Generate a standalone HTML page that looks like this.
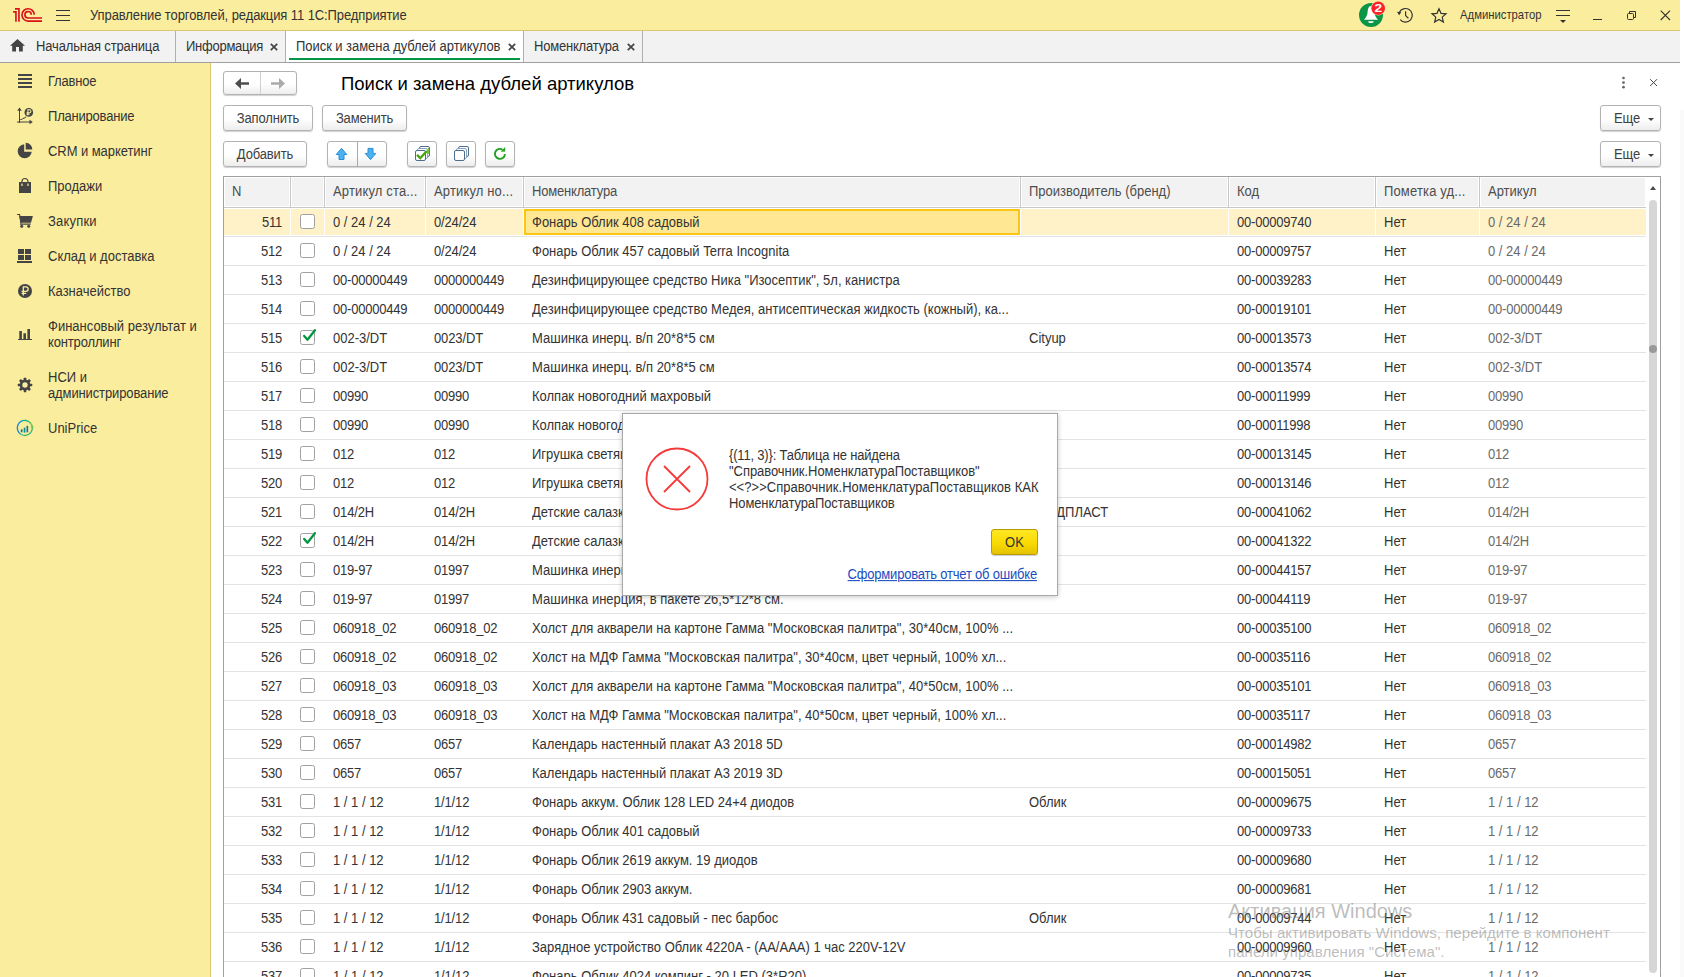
<!DOCTYPE html>
<html lang="ru">
<head>
<meta charset="utf-8">
<title>Управление торговлей, редакция 11 1С:Предприятие</title>
<style>
*{box-sizing:border-box;margin:0;padding:0}
html,body{width:1684px;height:977px;overflow:hidden;background:#fff}
body{font-family:"Liberation Sans",Arial,sans-serif;font-size:13px;color:#333;position:relative}
.abs{position:absolute}
#app{position:absolute;left:0;top:0;width:1680px;height:977px;overflow:hidden;background:#fff}
#edge{position:absolute;left:1680px;top:110px;width:4px;height:867px;background:#fafafa}
/* top bar */
#top{position:absolute;left:0;top:0;width:1680px;height:31px;background:#fbed9e;border-bottom:1px solid #d9c66f}
#top .ttl{position:absolute;left:90px;top:0;height:30px;line-height:31px;font-size:13px;color:#333;white-space:nowrap}
#top .usr{position:absolute;left:1460px;top:0;height:30px;line-height:30px;font-size:11.3px;color:#333;white-space:nowrap}
/* tabs */
#tabs{position:absolute;left:0;top:31px;width:1680px;height:32px;background:#f2f2f2;border-bottom:1px solid #a0a0a0}
.tsep{position:absolute;top:0;width:1px;height:31px;background:#b0b0b0}
.tt{position:absolute;top:0;height:31px;line-height:31px;white-space:nowrap;color:#333}
/* sidebar */
#side{position:absolute;left:0;top:63px;width:211px;height:914px;background:#fbed9e;border-right:1px solid #d9c66f}
.mi{position:absolute;left:48px;white-space:nowrap;line-height:16px;color:#333}
/* form */
.btn{letter-spacing:-.15px;position:absolute;height:26px;border:1px solid #b3b3b3;border-radius:3px;background:linear-gradient(#fff 0,#fff 55%,#ededed 100%);box-shadow:0 1px 1px rgba(0,0,0,.18);text-align:center;line-height:25px;color:#404040;white-space:nowrap}
.btn.nav{height:24px}
.btn .sep{position:absolute;top:0;bottom:0;width:1px;background:#d0d0d0}
h1{position:absolute;left:341px;top:72px;height:24px;line-height:24px;font-size:18.5px;font-weight:normal;color:#000;white-space:nowrap}
.dd{position:absolute;left:47px;top:12px;width:0;height:0;border:3.500px solid transparent;border-bottom:none;border-top:3.500px solid #444}
/* table */
.tbl{position:absolute;left:223px;top:176px;width:1438px;height:820px;border:1px solid #a0a0a0;border-bottom:none;background:#fff;overflow:hidden}
.tbl>*{position:absolute}
.thead{left:0;top:0;width:1422px;height:31px;background:#fff;border-bottom:1px solid #c8c8c8}
.th{position:absolute;top:1px;height:28px;background:#f2f2f2;color:#4d4d4d;line-height:27px;overflow:hidden;white-space:nowrap}
.th span{display:block;overflow:hidden}
.vs{position:absolute;top:0;width:1px;height:30px;background:#c8c8c8}
.tr{left:0;width:1422px;height:29px;border-bottom:1px solid #e3e3e3}
.td{position:absolute;top:1px;height:26px;line-height:27px;margin-top:0;padding-right:2px;overflow:hidden;white-space:nowrap;color:#333}
.td span{display:block;overflow:hidden;margin-top:-1px;height:28px;line-height:29px}
.td.num{text-align:right;padding-right:8px;padding-left:0 !important}
.td.gray{color:#6a6a6a}
.tr.sel .td{background:#fff2c8}
.tr.sel .td.act{background:#ffe794;border:2px solid #fac515}
.tr.sel .td.act span{margin-top:-3px;margin-left:-2px}
.cb{position:absolute;left:9px;top:5px;width:15px;height:15px;border:1px solid #a0a0a0;border-radius:2.500px;background:#fff}
.cb svg{position:absolute;left:-1px;top:-6px}
.vsb{left:1422px;top:0;width:14px;height:820px;background:#fff}
.vsb .up{position:absolute;left:4px;top:9px;width:0;height:0;border:3.5px solid transparent;border-top:none;border-bottom:4px solid #4a4a4a}
.vsb .thumb{position:absolute;left:3px;top:23px;width:8px;height:773px;border-radius:4px;background:#d6d6d6}
.vsb .dot{position:absolute;left:3px;top:168px;width:8px;height:8px;border-radius:4px;background:#999}
.td span,.th span{transform:scaleY(1.07);transform-origin:0 19.500px}
.mi .l{display:block;height:16px;transform:scaleY(1.07);transform-origin:0 12.500px}
.tt,.ttl{transform:scaleY(1.07);transform-origin:0 20px}
.usr{transform:scaleY(1.07);transform-origin:0 19px}
.bt{display:inline-block;height:24px;transform:scaleY(1.07);transform-origin:0 17px}
#dlg .msg span{display:block;height:16px;transform:scaleY(1.07);transform-origin:0 12.500px}
#dlg .ok span,#dlg .lnk span{display:inline-block;transform:scaleY(1.07);transform-origin:0 75%}
#dlg .lnk span{text-decoration:underline;text-underline-offset:1px}
/* dialog */
#dlg{position:absolute;left:622px;top:413px;width:436px;height:183px;background:#fff;border:1px solid #a8a8a8;box-shadow:0 1px 5px rgba(0,0,0,.22)}
#dlg .msg{position:absolute;left:106px;top:34px;line-height:16px;white-space:nowrap;color:#333;font-size:13px}
#dlg .ok{position:absolute;left:368px;top:115px;width:47px;height:26px;border:1px solid #b89b00;border-radius:3px;background:linear-gradient(#ffe824 0,#f8d800 60%,#e3c300 100%);text-align:center;line-height:25px;color:#333;box-shadow:0 1px 1px rgba(0,0,0,.2)}
#dlg .lnk{position:absolute;right:20px;top:153px;line-height:16px;letter-spacing:-.2px;color:#1a4dc0;text-decoration:underline;white-space:nowrap}
/* watermark */
#wm{position:absolute;left:1228px;top:899px;color:rgba(105,105,105,.45);white-space:nowrap}
</style>
</head>
<body>
<div id="app">
<div id="top">
 <svg class="abs" style="left:0;top:0" width="48" height="30" viewBox="0 0 48 30"><g fill="none" stroke="#d8121b" stroke-width="1.65"><path d="M15 8.900H18.950V21.800"/><path d="M13.100 11.900H15.950V21.800"/><path d="M34.250 14.700A6.150 6.150 0 1 0 28.100 21.050H42"/><path d="M31.300 14.700A3.200 3.200 0 1 0 28.100 17.950H42"/></g></svg>
 <div class="abs" style="left:56px;top:10px;width:14px;height:1px;background:#333;box-shadow:0 5px 0 #333,0 10px 0 #333"></div>
 <div class="ttl" style="letter-spacing:-.095px">Управление торговлей, редакция 11 1С:Предприятие</div>
 <svg class="abs" style="left:1355px;top:0" width="34" height="30" viewBox="1355 0 34 30"><circle cx="1371" cy="15" r="12" fill="#0a9646"/><path d="M1371 6C1368.500 6 1367.900 9 1367.600 12C1367.300 15.500 1366.200 17.600 1364 19.700H1378C1375.800 17.600 1374.700 15.500 1374.400 12C1374.100 9 1373.500 6 1371 6Z" fill="#fff"/><path d="M1368.200 21.200h5.600a2.800 1.900 0 0 1-5.600 0z" fill="#fff"/><circle cx="1378.200" cy="8.200" r="7.300" fill="#fdf3c0"/><circle cx="1378.200" cy="8.200" r="6.800" fill="#ff2222"/><text x="1374.400" y="12" font-size="10.800" font-weight="bold" fill="#fff" textLength="7.600" lengthAdjust="spacingAndGlyphs" font-family="Liberation Sans,sans-serif">2</text></svg>
 <svg class="abs" style="left:1394px;top:4px" width="24" height="24" viewBox="1394 4 24 24"><g fill="none" stroke="#333" stroke-width="1.200"><path d="M1399.200 12.800A6.800 6.800 0 1 1 1400.200 19.600"/><path d="M1405.600 11.300v4.300l2.800 2.700"/></g><path d="M1397 11.800l4.300.4-2.200 3.100z" fill="#333"/></svg>
 <svg class="abs" style="left:1425px;top:0" width="30" height="30" viewBox="1425 0 30 30"><path d="M1439.00 8.70L1441.00 13.35L1446.04 13.81L1442.23 17.15L1443.35 22.09L1439.00 19.50L1434.65 22.09L1435.77 17.15L1431.96 13.81L1437.00 13.35z" fill="none" stroke="#333" stroke-width="1.200" stroke-linejoin="miter"/></svg>
 <div class="usr">Администратор</div>
 <div class="abs" style="left:1556px;top:10px;width:14px;height:1px;background:#333;box-shadow:0 5px 0 #333"></div>
 <div class="abs" style="left:1560px;top:20px;width:0;height:0;border:3px solid transparent;border-bottom:none;border-top:3px solid #333"></div>
 <div class="abs" style="left:1593px;top:19px;width:9px;height:1px;background:#333"></div>
 <svg class="abs" style="left:1626px;top:10px" width="11" height="11" viewBox="0 0 11 11"><g fill="none" stroke="#333" stroke-width="1"><path d="M3.500 3.500V1.500h6v6h-2"/><rect x="1.500" y="3.500" width="6" height="6" rx="1"/></g></svg>
 <svg class="abs" style="left:1660px;top:10px" width="11" height="11" viewBox="0 0 11 11"><path d="M.7.700l9.300 9.300M10 .7L.7 10" stroke="#333" stroke-width="1.100" fill="none"/></svg>
</div>
<div id="tabs">
 <div class="tsep" style="left:175px"></div><div class="tsep" style="left:285px"></div><div class="tsep" style="left:523px"></div><div class="tsep" style="left:642px"></div>
 <div class="abs" style="left:286px;top:0;width:237px;height:31px;background:#fff"></div>
 <div class="abs" style="left:289px;top:27px;width:231px;height:2px;background:#009646"></div>
 <svg class="abs" style="left:10px;top:8px" width="15" height="13" viewBox="0 0 15 13"><path d="M7.500 0L0 6.800h2.200V12.500h3.800V8h3v4.500h3.800V6.800H15z" fill="#444"/></svg>
 <span class="tt" style="left:36px;letter-spacing:-.14px">Начальная страница</span>
 <span class="tt" style="left:186px;letter-spacing:-.25px">Информация</span><svg class="abs" style="left:270px;top:11.500px" width="8" height="8" viewBox="0 0 8 8"><path d="M.8.800l6.400 6.400M7.200.800L.8 7.200" stroke="#444" stroke-width="1.700" fill="none"/></svg>
 <span class="tt" style="left:296px;letter-spacing:-.05px">Поиск и замена дублей артикулов</span><svg class="abs" style="left:508px;top:11.500px" width="8" height="8" viewBox="0 0 8 8"><path d="M.8.800l6.400 6.400M7.200.800L.8 7.200" stroke="#444" stroke-width="1.700" fill="none"/></svg>
 <span class="tt" style="left:534px;letter-spacing:-.2px">Номенклатура</span><svg class="abs" style="left:627px;top:11.500px" width="8" height="8" viewBox="0 0 8 8"><path d="M.8.800l6.400 6.400M7.200.800L.8 7.200" stroke="#444" stroke-width="1.700" fill="none"/></svg>
</div>
<div id="side">
 <div class="mi" style="top:11px;letter-spacing:-.2px"><span class="l">Главное</span></div>
 <div class="mi" style="top:46px;letter-spacing:-.21px"><span class="l">Планирование</span></div>
 <div class="mi" style="top:81px;letter-spacing:-.06px"><span class="l">CRM и маркетинг</span></div>
 <div class="mi" style="top:116px"><span class="l">Продажи</span></div>
 <div class="mi" style="top:151px;letter-spacing:.2px"><span class="l">Закупки</span></div>
 <div class="mi" style="top:186px"><span class="l">Склад и доставка</span></div>
 <div class="mi" style="top:221px"><span class="l">Казначейство</span></div>
 <div class="mi" style="top:256px"><span class="l">Финансовый результат и</span><span class="l" style="letter-spacing:-.15px">контроллинг</span></div>
 <div class="mi" style="top:307px"><span class="l">НСИ и</span><span class="l" style="letter-spacing:-.12px">администрирование</span></div>
 <div class="mi" style="top:358px"><span class="l">UniPrice</span></div>
</div>
<svg class="abs" style="left:0;top:63px" width="48" height="400" viewBox="0 63 48 400">
<g fill="#444">
<rect x="18" y="74" width="14" height="2"/><rect x="18" y="78" width="14" height="2"/><rect x="18" y="82" width="14" height="2"/><rect x="18" y="86" width="14" height="2"/>
<path d="M19 110h1v13h-1zM17 121.500h13v1H17zM19.500 107.500l2.300 3.200h-4.600zM32.800 122l-3.300 2.300v-4.600z"/>
<path d="M20.300 119.500h1.600l.9-1.200h1.600l.8-1.200h1" fill="none" stroke="#444" stroke-width="1"/>
<circle cx="28.800" cy="112.400" r="4.300"/>
<path d="M24.200 144.300A7 7 0 1 0 31.700 151.800H24.200z"/><path d="M25.700 142.800A6.600 6.600 0 0 1 32.300 149.400H25.700z"/>
<rect x="19" y="182" width="12" height="11"/>
<path d="M19.300 216h13.600l-1.900 6.700H20.500zM20 223.500h10.700v1.200H20z"/><path d="M17 214.500h2.600l1.400 9" fill="none" stroke="#444" stroke-width="1.200"/><circle cx="21.700" cy="226.300" r="1.500"/><circle cx="28.700" cy="226.300" r="1.500"/>
<rect x="18" y="249" width="6" height="5"/><rect x="25" y="249" width="6" height="5"/><rect x="18" y="255" width="6" height="5"/><rect x="25" y="255" width="6" height="5"/><rect x="17" y="261" width="15" height="2"/>
<circle cx="25" cy="291" r="7"/>
<rect x="19.300" y="331" width="2.600" height="8"/><rect x="23.400" y="333.300" width="2.600" height="6"/><rect x="27.400" y="329" width="2.600" height="10"/><rect x="18" y="339" width="14" height="1"/>
</g>
<path d="M22 184.500v-3a3 3 0 0 1 6 0v3" fill="none" stroke="#444" stroke-width="1.200"/>
<path d="M22 186v-2.500M28 186v-2.500" fill="none" stroke="#fbed9e" stroke-width="1.200"/>
<g fill="none" stroke="#fbed9e" stroke-width="1.050"><path d="M27.900 115.400v-5.700h1.500a1.500 1.500 0 0 1 0 3h-2.900M26.500 114.100h3"/></g>
<g fill="none" stroke="#fbed9e" stroke-width="1.300"><path d="M23.300 295.500v-8.700h2.600a2.300 2.300 0 0 1 0 4.600h-4.300M21.600 293.300h4.600"/></g>
<g transform="translate(25 385)"><g fill="#444"><circle r="5.400"/><rect x="-1.300" y="-7.200" width="2.600" height="14.400" rx=".5" transform="rotate(0)"/><rect x="-1.300" y="-7.200" width="2.600" height="14.400" rx=".5" transform="rotate(45)"/><rect x="-1.300" y="-7.200" width="2.600" height="14.400" rx=".5" transform="rotate(90)"/><rect x="-1.300" y="-7.200" width="2.600" height="14.400" rx=".5" transform="rotate(135)"/></g><circle r="2.700" fill="#fbed9e"/></g>
<defs><linearGradient id="ug" x1="0" y1="0" x2="1" y2="0"><stop offset="0" stop-color="#1e88e5"/><stop offset=".5" stop-color="#00b294"/><stop offset="1" stop-color="#7ac943"/></linearGradient></defs>
<path d="M21.300 434.500A7.500 7.500 0 1 1 32.300 427.800" fill="none" stroke="url(#ug)" stroke-width="1.400"/>
<path d="M32.300 427.800A7.500 7.500 0 0 1 21.300 434.500" fill="none" stroke="#3cb878" stroke-width="1.400"/>
<path d="M30.300 427.600l1.900-3 1.700 3.200z" fill="#7ac943"/>
<rect x="20.800" y="429.300" width="1.700" height="3" fill="#16749a"/><rect x="23.700" y="427.600" width="1.700" height="5" fill="#0e8f8f"/><rect x="26.500" y="425.800" width="1.700" height="6.500" fill="#16749a"/>
</svg>
<div class="btn nav" style="left:223px;top:71px;width:74px"><div class="sep" style="left:36px"></div><svg class="abs" style="left:-1px;top:-1px" width="74" height="24" viewBox="223 71 74 24"><path d="M235 83.500l6-5.400v4.100h8v2.600h-8v4.100z" fill="#4d4d4d"/><path d="M285 83.500l-6-5.400v4.100h-8v2.600h8v4.100z" fill="#ababab"/></svg></div>
<svg class="abs" style="left:1616px;top:74px" width="46" height="18" viewBox="1616 74 46 18"><g fill="#666"><circle cx="1623.500" cy="78" r="1.350"/><circle cx="1623.500" cy="82.600" r="1.350"/><circle cx="1623.500" cy="87.200" r="1.350"/></g><path d="M1650.200 79.200l6.800 6.800M1657 79.200l-6.800 6.800" stroke="#444" stroke-width="1" fill="none"/></svg>
<h1>Поиск и замена дублей артикулов</h1>
<div class="btn" style="left:223px;top:105px;width:90px"><span class="bt">Заполнить</span></div>
<div class="btn" style="left:322px;top:105px;width:85px"><span class="bt">Заменить</span></div>
<div class="btn" style="left:1600px;top:105px;width:61px;text-align:left;padding-left:13px"><span class="bt">Еще</span><i class="dd"></i></div>
<div class="btn" style="left:223px;top:141px;width:84px"><span class="bt">Добавить</span></div>
<div class="btn" style="left:327px;top:141px;width:60px"><div class="sep" style="left:29px;background:#a8a8a8"></div><svg class="abs" style="left:-1px;top:-1px" width="60" height="26" viewBox="327 141 60 26"><g fill="#4db2f0" stroke="#2b8dd6" stroke-width="1" stroke-linejoin="miter"><path d="M341.500 148.300l5.300 6.200h-2.800v5h-5v-5h-2.800z"/><path d="M370.500 159.600l5.300-6.200h-2.800v-5h-5v5h-2.800z"/></g></svg></div>
<div class="btn" style="left:407px;top:141px;width:30px"><svg class="abs" style="left:-1px;top:-1px" width="30" height="26" viewBox="407 141 30 26"><g fill="#fff" stroke="#4d6e8c" stroke-width="1"><rect x="419.500" y="146.500" width="10" height="10" rx="1.500"/><rect x="417.500" y="148.500" width="10" height="10" rx="1.500" stroke="#8aa0b4"/><rect x="415.500" y="150.500" width="10" height="10" rx="1.500"/></g><path d="M428.500 148v6" stroke="#7cc043" stroke-width="1.500"/><path d="M417 154.800l3.300 3.200 6.600-7" fill="none" stroke="#4aa80f" stroke-width="2.400"/></svg></div>
<div class="btn" style="left:446px;top:141px;width:30px"><svg class="abs" style="left:-1px;top:-1px" width="30" height="26" viewBox="446 141 30 26"><g fill="#fff" stroke="#4d6e8c" stroke-width="1"><rect x="458.500" y="146.500" width="10" height="10" rx="1.500"/><rect x="456.500" y="148.500" width="10" height="10" rx="1.500" stroke="#8aa0b4"/><rect x="454.500" y="150.500" width="10" height="10" rx="1.500"/></g></svg></div>
<div class="btn" style="left:485px;top:141px;width:30px"><svg class="abs" style="left:-1px;top:-1px" width="30" height="26" viewBox="485 141 30 26"><path d="M504.900 153.900A5 5 0 1 1 502.500 149.600" fill="none" stroke="#21a121" stroke-width="1.900"/><path d="M500.800 151.700l4.500-.2-.2-4.500z" fill="#21a121"/></svg></div>
<div class="btn" style="left:1600px;top:141px;width:61px;text-align:left;padding-left:13px"><span class="bt">Еще</span><i class="dd"></i></div>

<div class="tbl">
<div class="thead">
<div class="th" style="left:1px;width:64px;padding-left:7px"><span>N</span></div>
<div class="th" style="left:68px;width:31px;padding-left:7px"><span></span></div>
<div class="th" style="left:102px;width:98px;padding-left:7px"><span style="letter-spacing:.15px">Артикул ста...</span></div>
<div class="th" style="left:203px;width:95px;padding-left:7px"><span style="letter-spacing:.15px">Артикул но...</span></div>
<div class="th" style="left:301px;width:494px;padding-left:7px"><span style="letter-spacing:-.19px">Номенклатура</span></div>
<div class="th" style="left:798px;width:205px;padding-left:7px"><span>Производитель (бренд)</span></div>
<div class="th" style="left:1006px;width:144px;padding-left:7px"><span>Код</span></div>
<div class="th" style="left:1153px;width:101px;padding-left:7px"><span style="letter-spacing:.15px">Пометка уд...</span></div>
<div class="th" style="left:1257px;width:164px;padding-left:7px"><span>Артикул</span></div>
<div class="vs" style="left:66px"></div>
<div class="vs" style="left:100px"></div>
<div class="vs" style="left:201px"></div>
<div class="vs" style="left:299px"></div>
<div class="vs" style="left:796px"></div>
<div class="vs" style="left:1004px"></div>
<div class="vs" style="left:1151px"></div>
<div class="vs" style="left:1255px"></div>
</div>
<div class="tr sel" style="top:31px">
<div class="td num" style="left:0px;width:66px;padding-left:8px"><span style="letter-spacing:-0.23px">511</span></div>
<div class="td" style="left:67px;width:33px;padding-left:8px"><i class="cb"></i></div>
<div class="td" style="left:101px;width:100px;padding-left:8px"><span>0 / 24 / 24</span></div>
<div class="td" style="left:202px;width:97px;padding-left:8px"><span style="letter-spacing:-0.16px">0/24/24</span></div>
<div class="td act" style="left:300px;width:496px;padding-left:8px"><span>Фонарь Облик 408 садовый</span></div>
<div class="td" style="left:797px;width:207px;padding-left:8px"></div>
<div class="td" style="left:1005px;width:146px;padding-left:8px"><span style="letter-spacing:-0.21px">00-00009740</span></div>
<div class="td" style="left:1152px;width:103px;padding-left:8px"><span>Нет</span></div>
<div class="td gray" style="left:1256px;width:166px;padding-left:8px"><span>0 / 24 / 24</span></div>
</div>
<div class="tr" style="top:60px">
<div class="td num" style="left:0px;width:66px;padding-left:8px"><span style="letter-spacing:-0.23px">512</span></div>
<div class="td" style="left:67px;width:33px;padding-left:8px"><i class="cb"></i></div>
<div class="td" style="left:101px;width:100px;padding-left:8px"><span>0 / 24 / 24</span></div>
<div class="td" style="left:202px;width:97px;padding-left:8px"><span style="letter-spacing:-0.16px">0/24/24</span></div>
<div class="td" style="left:300px;width:496px;padding-left:8px"><span>Фонарь Облик 457 садовый Terra Incognita</span></div>
<div class="td" style="left:1005px;width:146px;padding-left:8px"><span style="letter-spacing:-0.21px">00-00009757</span></div>
<div class="td" style="left:1152px;width:103px;padding-left:8px"><span>Нет</span></div>
<div class="td gray" style="left:1256px;width:166px;padding-left:8px"><span>0 / 24 / 24</span></div>
</div>
<div class="tr" style="top:89px">
<div class="td num" style="left:0px;width:66px;padding-left:8px"><span style="letter-spacing:-0.23px">513</span></div>
<div class="td" style="left:67px;width:33px;padding-left:8px"><i class="cb"></i></div>
<div class="td" style="left:101px;width:100px;padding-left:8px"><span style="letter-spacing:-0.21px">00-00000449</span></div>
<div class="td" style="left:202px;width:97px;padding-left:8px"><span style="letter-spacing:-0.23px">0000000449</span></div>
<div class="td" style="left:300px;width:496px;padding-left:8px"><span>Дезинфицирующее средство Ника "Изосептик", 5л, канистра</span></div>
<div class="td" style="left:1005px;width:146px;padding-left:8px"><span style="letter-spacing:-0.21px">00-00039283</span></div>
<div class="td" style="left:1152px;width:103px;padding-left:8px"><span>Нет</span></div>
<div class="td gray" style="left:1256px;width:166px;padding-left:8px"><span style="letter-spacing:-0.21px">00-00000449</span></div>
</div>
<div class="tr" style="top:118px">
<div class="td num" style="left:0px;width:66px;padding-left:8px"><span style="letter-spacing:-0.23px">514</span></div>
<div class="td" style="left:67px;width:33px;padding-left:8px"><i class="cb"></i></div>
<div class="td" style="left:101px;width:100px;padding-left:8px"><span style="letter-spacing:-0.21px">00-00000449</span></div>
<div class="td" style="left:202px;width:97px;padding-left:8px"><span style="letter-spacing:-0.23px">0000000449</span></div>
<div class="td" style="left:300px;width:496px;padding-left:8px"><span>Дезинфицирующее средство Медея, антисептическая жидкость (кожный), ка...</span></div>
<div class="td" style="left:1005px;width:146px;padding-left:8px"><span style="letter-spacing:-0.21px">00-00019101</span></div>
<div class="td" style="left:1152px;width:103px;padding-left:8px"><span>Нет</span></div>
<div class="td gray" style="left:1256px;width:166px;padding-left:8px"><span style="letter-spacing:-0.21px">00-00000449</span></div>
</div>
<div class="tr" style="top:147px">
<div class="td num" style="left:0px;width:66px;padding-left:8px"><span style="letter-spacing:-0.23px">515</span></div>
<div class="td" style="left:67px;width:33px;padding-left:8px"><i class="cb"><svg viewBox="0 0 17 19" width="17" height="19"><path d="M4.200 10.900L7.500 14.700L14.900 5.200" fill="none" stroke="#00963f" stroke-width="2.300" stroke-linecap="round" stroke-linejoin="round"/></svg></i></div>
<div class="td" style="left:101px;width:100px;padding-left:8px"><span>002-3/DT</span></div>
<div class="td" style="left:202px;width:97px;padding-left:8px"><span style="letter-spacing:-0.13px">0023/DT</span></div>
<div class="td" style="left:300px;width:496px;padding-left:8px"><span>Машинка инерц. в/п 20*8*5 см</span></div>
<div class="td" style="left:797px;width:207px;padding-left:8px"><span>Cityup</span></div>
<div class="td" style="left:1005px;width:146px;padding-left:8px"><span style="letter-spacing:-0.21px">00-00013573</span></div>
<div class="td" style="left:1152px;width:103px;padding-left:8px"><span>Нет</span></div>
<div class="td gray" style="left:1256px;width:166px;padding-left:8px"><span>002-3/DT</span></div>
</div>
<div class="tr" style="top:176px">
<div class="td num" style="left:0px;width:66px;padding-left:8px"><span style="letter-spacing:-0.23px">516</span></div>
<div class="td" style="left:67px;width:33px;padding-left:8px"><i class="cb"></i></div>
<div class="td" style="left:101px;width:100px;padding-left:8px"><span>002-3/DT</span></div>
<div class="td" style="left:202px;width:97px;padding-left:8px"><span style="letter-spacing:-0.13px">0023/DT</span></div>
<div class="td" style="left:300px;width:496px;padding-left:8px"><span>Машинка инерц. в/п 20*8*5 см</span></div>
<div class="td" style="left:1005px;width:146px;padding-left:8px"><span style="letter-spacing:-0.21px">00-00013574</span></div>
<div class="td" style="left:1152px;width:103px;padding-left:8px"><span>Нет</span></div>
<div class="td gray" style="left:1256px;width:166px;padding-left:8px"><span>002-3/DT</span></div>
</div>
<div class="tr" style="top:205px">
<div class="td num" style="left:0px;width:66px;padding-left:8px"><span style="letter-spacing:-0.23px">517</span></div>
<div class="td" style="left:67px;width:33px;padding-left:8px"><i class="cb"></i></div>
<div class="td" style="left:101px;width:100px;padding-left:8px"><span style="letter-spacing:-0.23px">00990</span></div>
<div class="td" style="left:202px;width:97px;padding-left:8px"><span style="letter-spacing:-0.23px">00990</span></div>
<div class="td" style="left:300px;width:496px;padding-left:8px"><span>Колпак новогодний махровый</span></div>
<div class="td" style="left:1005px;width:146px;padding-left:8px"><span style="letter-spacing:-0.21px">00-00011999</span></div>
<div class="td" style="left:1152px;width:103px;padding-left:8px"><span>Нет</span></div>
<div class="td gray" style="left:1256px;width:166px;padding-left:8px"><span style="letter-spacing:-0.23px">00990</span></div>
</div>
<div class="tr" style="top:234px">
<div class="td num" style="left:0px;width:66px;padding-left:8px"><span style="letter-spacing:-0.23px">518</span></div>
<div class="td" style="left:67px;width:33px;padding-left:8px"><i class="cb"></i></div>
<div class="td" style="left:101px;width:100px;padding-left:8px"><span style="letter-spacing:-0.23px">00990</span></div>
<div class="td" style="left:202px;width:97px;padding-left:8px"><span style="letter-spacing:-0.23px">00990</span></div>
<div class="td" style="left:300px;width:496px;padding-left:8px"><span>Колпак новогодний</span></div>
<div class="td" style="left:1005px;width:146px;padding-left:8px"><span style="letter-spacing:-0.21px">00-00011998</span></div>
<div class="td" style="left:1152px;width:103px;padding-left:8px"><span>Нет</span></div>
<div class="td gray" style="left:1256px;width:166px;padding-left:8px"><span style="letter-spacing:-0.23px">00990</span></div>
</div>
<div class="tr" style="top:263px">
<div class="td num" style="left:0px;width:66px;padding-left:8px"><span style="letter-spacing:-0.23px">519</span></div>
<div class="td" style="left:67px;width:33px;padding-left:8px"><i class="cb"></i></div>
<div class="td" style="left:101px;width:100px;padding-left:8px"><span style="letter-spacing:-0.23px">012</span></div>
<div class="td" style="left:202px;width:97px;padding-left:8px"><span style="letter-spacing:-0.23px">012</span></div>
<div class="td" style="left:300px;width:496px;padding-left:8px"><span>Игрушка светящаяся</span></div>
<div class="td" style="left:1005px;width:146px;padding-left:8px"><span style="letter-spacing:-0.21px">00-00013145</span></div>
<div class="td" style="left:1152px;width:103px;padding-left:8px"><span>Нет</span></div>
<div class="td gray" style="left:1256px;width:166px;padding-left:8px"><span style="letter-spacing:-0.23px">012</span></div>
</div>
<div class="tr" style="top:292px">
<div class="td num" style="left:0px;width:66px;padding-left:8px"><span style="letter-spacing:-0.23px">520</span></div>
<div class="td" style="left:67px;width:33px;padding-left:8px"><i class="cb"></i></div>
<div class="td" style="left:101px;width:100px;padding-left:8px"><span style="letter-spacing:-0.23px">012</span></div>
<div class="td" style="left:202px;width:97px;padding-left:8px"><span style="letter-spacing:-0.23px">012</span></div>
<div class="td" style="left:300px;width:496px;padding-left:8px"><span>Игрушка светящаяся</span></div>
<div class="td" style="left:1005px;width:146px;padding-left:8px"><span style="letter-spacing:-0.21px">00-00013146</span></div>
<div class="td" style="left:1152px;width:103px;padding-left:8px"><span>Нет</span></div>
<div class="td gray" style="left:1256px;width:166px;padding-left:8px"><span style="letter-spacing:-0.23px">012</span></div>
</div>
<div class="tr" style="top:321px">
<div class="td num" style="left:0px;width:66px;padding-left:8px"><span style="letter-spacing:-0.23px">521</span></div>
<div class="td" style="left:67px;width:33px;padding-left:8px"><i class="cb"></i></div>
<div class="td" style="left:101px;width:100px;padding-left:8px"><span style="letter-spacing:-0.15px">014/2H</span></div>
<div class="td" style="left:202px;width:97px;padding-left:8px"><span style="letter-spacing:-0.15px">014/2H</span></div>
<div class="td" style="left:300px;width:496px;padding-left:8px"><span>Детские салазки</span></div>
<div class="td" style="left:797px;width:207px;padding-left:8px"><span>НОРДПЛАСТ</span></div>
<div class="td" style="left:1005px;width:146px;padding-left:8px"><span style="letter-spacing:-0.21px">00-00041062</span></div>
<div class="td" style="left:1152px;width:103px;padding-left:8px"><span>Нет</span></div>
<div class="td gray" style="left:1256px;width:166px;padding-left:8px"><span style="letter-spacing:-0.15px">014/2H</span></div>
</div>
<div class="tr" style="top:350px">
<div class="td num" style="left:0px;width:66px;padding-left:8px"><span style="letter-spacing:-0.23px">522</span></div>
<div class="td" style="left:67px;width:33px;padding-left:8px"><i class="cb"><svg viewBox="0 0 17 19" width="17" height="19"><path d="M4.200 10.900L7.500 14.700L14.900 5.200" fill="none" stroke="#00963f" stroke-width="2.300" stroke-linecap="round" stroke-linejoin="round"/></svg></i></div>
<div class="td" style="left:101px;width:100px;padding-left:8px"><span style="letter-spacing:-0.15px">014/2H</span></div>
<div class="td" style="left:202px;width:97px;padding-left:8px"><span style="letter-spacing:-0.15px">014/2H</span></div>
<div class="td" style="left:300px;width:496px;padding-left:8px"><span>Детские салазки</span></div>
<div class="td" style="left:1005px;width:146px;padding-left:8px"><span style="letter-spacing:-0.21px">00-00041322</span></div>
<div class="td" style="left:1152px;width:103px;padding-left:8px"><span>Нет</span></div>
<div class="td gray" style="left:1256px;width:166px;padding-left:8px"><span style="letter-spacing:-0.15px">014/2H</span></div>
</div>
<div class="tr" style="top:379px">
<div class="td num" style="left:0px;width:66px;padding-left:8px"><span style="letter-spacing:-0.23px">523</span></div>
<div class="td" style="left:67px;width:33px;padding-left:8px"><i class="cb"></i></div>
<div class="td" style="left:101px;width:100px;padding-left:8px"><span style="letter-spacing:-0.19px">019-97</span></div>
<div class="td" style="left:202px;width:97px;padding-left:8px"><span style="letter-spacing:-0.23px">01997</span></div>
<div class="td" style="left:300px;width:496px;padding-left:8px"><span>Машинка инерция</span></div>
<div class="td" style="left:1005px;width:146px;padding-left:8px"><span style="letter-spacing:-0.21px">00-00044157</span></div>
<div class="td" style="left:1152px;width:103px;padding-left:8px"><span>Нет</span></div>
<div class="td gray" style="left:1256px;width:166px;padding-left:8px"><span style="letter-spacing:-0.19px">019-97</span></div>
</div>
<div class="tr" style="top:408px">
<div class="td num" style="left:0px;width:66px;padding-left:8px"><span style="letter-spacing:-0.23px">524</span></div>
<div class="td" style="left:67px;width:33px;padding-left:8px"><i class="cb"></i></div>
<div class="td" style="left:101px;width:100px;padding-left:8px"><span style="letter-spacing:-0.19px">019-97</span></div>
<div class="td" style="left:202px;width:97px;padding-left:8px"><span style="letter-spacing:-0.23px">01997</span></div>
<div class="td" style="left:300px;width:496px;padding-left:8px"><span>Машинка инерция, в пакете 26,5*12*8 см.</span></div>
<div class="td" style="left:1005px;width:146px;padding-left:8px"><span style="letter-spacing:-0.21px">00-00044119</span></div>
<div class="td" style="left:1152px;width:103px;padding-left:8px"><span>Нет</span></div>
<div class="td gray" style="left:1256px;width:166px;padding-left:8px"><span style="letter-spacing:-0.19px">019-97</span></div>
</div>
<div class="tr" style="top:437px">
<div class="td num" style="left:0px;width:66px;padding-left:8px"><span style="letter-spacing:-0.23px">525</span></div>
<div class="td" style="left:67px;width:33px;padding-left:8px"><i class="cb"></i></div>
<div class="td" style="left:101px;width:100px;padding-left:8px"><span style="letter-spacing:-0.20px">060918_02</span></div>
<div class="td" style="left:202px;width:97px;padding-left:8px"><span style="letter-spacing:-0.20px">060918_02</span></div>
<div class="td" style="left:300px;width:496px;padding-left:8px"><span>Холст для акварели на картоне Гамма "Московская палитра", 30*40см, 100% ...</span></div>
<div class="td" style="left:1005px;width:146px;padding-left:8px"><span style="letter-spacing:-0.21px">00-00035100</span></div>
<div class="td" style="left:1152px;width:103px;padding-left:8px"><span>Нет</span></div>
<div class="td gray" style="left:1256px;width:166px;padding-left:8px"><span style="letter-spacing:-0.20px">060918_02</span></div>
</div>
<div class="tr" style="top:466px">
<div class="td num" style="left:0px;width:66px;padding-left:8px"><span style="letter-spacing:-0.23px">526</span></div>
<div class="td" style="left:67px;width:33px;padding-left:8px"><i class="cb"></i></div>
<div class="td" style="left:101px;width:100px;padding-left:8px"><span style="letter-spacing:-0.20px">060918_02</span></div>
<div class="td" style="left:202px;width:97px;padding-left:8px"><span style="letter-spacing:-0.20px">060918_02</span></div>
<div class="td" style="left:300px;width:496px;padding-left:8px"><span>Холст на МДФ Гамма "Московская палитра", 30*40см, цвет черный, 100% хл...</span></div>
<div class="td" style="left:1005px;width:146px;padding-left:8px"><span style="letter-spacing:-0.21px">00-00035116</span></div>
<div class="td" style="left:1152px;width:103px;padding-left:8px"><span>Нет</span></div>
<div class="td gray" style="left:1256px;width:166px;padding-left:8px"><span style="letter-spacing:-0.20px">060918_02</span></div>
</div>
<div class="tr" style="top:495px">
<div class="td num" style="left:0px;width:66px;padding-left:8px"><span style="letter-spacing:-0.23px">527</span></div>
<div class="td" style="left:67px;width:33px;padding-left:8px"><i class="cb"></i></div>
<div class="td" style="left:101px;width:100px;padding-left:8px"><span style="letter-spacing:-0.20px">060918_03</span></div>
<div class="td" style="left:202px;width:97px;padding-left:8px"><span style="letter-spacing:-0.20px">060918_03</span></div>
<div class="td" style="left:300px;width:496px;padding-left:8px"><span>Холст для акварели на картоне Гамма "Московская палитра", 40*50см, 100% ...</span></div>
<div class="td" style="left:1005px;width:146px;padding-left:8px"><span style="letter-spacing:-0.21px">00-00035101</span></div>
<div class="td" style="left:1152px;width:103px;padding-left:8px"><span>Нет</span></div>
<div class="td gray" style="left:1256px;width:166px;padding-left:8px"><span style="letter-spacing:-0.20px">060918_03</span></div>
</div>
<div class="tr" style="top:524px">
<div class="td num" style="left:0px;width:66px;padding-left:8px"><span style="letter-spacing:-0.23px">528</span></div>
<div class="td" style="left:67px;width:33px;padding-left:8px"><i class="cb"></i></div>
<div class="td" style="left:101px;width:100px;padding-left:8px"><span style="letter-spacing:-0.20px">060918_03</span></div>
<div class="td" style="left:202px;width:97px;padding-left:8px"><span style="letter-spacing:-0.20px">060918_03</span></div>
<div class="td" style="left:300px;width:496px;padding-left:8px"><span>Холст на МДФ Гамма "Московская палитра", 40*50см, цвет черный, 100% хл...</span></div>
<div class="td" style="left:1005px;width:146px;padding-left:8px"><span style="letter-spacing:-0.21px">00-00035117</span></div>
<div class="td" style="left:1152px;width:103px;padding-left:8px"><span>Нет</span></div>
<div class="td gray" style="left:1256px;width:166px;padding-left:8px"><span style="letter-spacing:-0.20px">060918_03</span></div>
</div>
<div class="tr" style="top:553px">
<div class="td num" style="left:0px;width:66px;padding-left:8px"><span style="letter-spacing:-0.23px">529</span></div>
<div class="td" style="left:67px;width:33px;padding-left:8px"><i class="cb"></i></div>
<div class="td" style="left:101px;width:100px;padding-left:8px"><span style="letter-spacing:-0.23px">0657</span></div>
<div class="td" style="left:202px;width:97px;padding-left:8px"><span style="letter-spacing:-0.23px">0657</span></div>
<div class="td" style="left:300px;width:496px;padding-left:8px"><span>Календарь настенный плакат А3 2018 5D</span></div>
<div class="td" style="left:1005px;width:146px;padding-left:8px"><span style="letter-spacing:-0.21px">00-00014982</span></div>
<div class="td" style="left:1152px;width:103px;padding-left:8px"><span>Нет</span></div>
<div class="td gray" style="left:1256px;width:166px;padding-left:8px"><span style="letter-spacing:-0.23px">0657</span></div>
</div>
<div class="tr" style="top:582px">
<div class="td num" style="left:0px;width:66px;padding-left:8px"><span style="letter-spacing:-0.23px">530</span></div>
<div class="td" style="left:67px;width:33px;padding-left:8px"><i class="cb"></i></div>
<div class="td" style="left:101px;width:100px;padding-left:8px"><span style="letter-spacing:-0.23px">0657</span></div>
<div class="td" style="left:202px;width:97px;padding-left:8px"><span style="letter-spacing:-0.23px">0657</span></div>
<div class="td" style="left:300px;width:496px;padding-left:8px"><span>Календарь настенный плакат А3 2019 3D</span></div>
<div class="td" style="left:1005px;width:146px;padding-left:8px"><span style="letter-spacing:-0.21px">00-00015051</span></div>
<div class="td" style="left:1152px;width:103px;padding-left:8px"><span>Нет</span></div>
<div class="td gray" style="left:1256px;width:166px;padding-left:8px"><span style="letter-spacing:-0.23px">0657</span></div>
</div>
<div class="tr" style="top:611px">
<div class="td num" style="left:0px;width:66px;padding-left:8px"><span style="letter-spacing:-0.23px">531</span></div>
<div class="td" style="left:67px;width:33px;padding-left:8px"><i class="cb"></i></div>
<div class="td" style="left:101px;width:100px;padding-left:8px"><span>1 / 1 / 12</span></div>
<div class="td" style="left:202px;width:97px;padding-left:8px"><span style="letter-spacing:-0.15px">1/1/12</span></div>
<div class="td" style="left:300px;width:496px;padding-left:8px"><span>Фонарь аккум. Облик 128 LED 24+4 диодов</span></div>
<div class="td" style="left:797px;width:207px;padding-left:8px"><span>Облик</span></div>
<div class="td" style="left:1005px;width:146px;padding-left:8px"><span style="letter-spacing:-0.21px">00-00009675</span></div>
<div class="td" style="left:1152px;width:103px;padding-left:8px"><span>Нет</span></div>
<div class="td gray" style="left:1256px;width:166px;padding-left:8px"><span>1 / 1 / 12</span></div>
</div>
<div class="tr" style="top:640px">
<div class="td num" style="left:0px;width:66px;padding-left:8px"><span style="letter-spacing:-0.23px">532</span></div>
<div class="td" style="left:67px;width:33px;padding-left:8px"><i class="cb"></i></div>
<div class="td" style="left:101px;width:100px;padding-left:8px"><span>1 / 1 / 12</span></div>
<div class="td" style="left:202px;width:97px;padding-left:8px"><span style="letter-spacing:-0.15px">1/1/12</span></div>
<div class="td" style="left:300px;width:496px;padding-left:8px"><span>Фонарь Облик 401 садовый</span></div>
<div class="td" style="left:1005px;width:146px;padding-left:8px"><span style="letter-spacing:-0.21px">00-00009733</span></div>
<div class="td" style="left:1152px;width:103px;padding-left:8px"><span>Нет</span></div>
<div class="td gray" style="left:1256px;width:166px;padding-left:8px"><span>1 / 1 / 12</span></div>
</div>
<div class="tr" style="top:669px">
<div class="td num" style="left:0px;width:66px;padding-left:8px"><span style="letter-spacing:-0.23px">533</span></div>
<div class="td" style="left:67px;width:33px;padding-left:8px"><i class="cb"></i></div>
<div class="td" style="left:101px;width:100px;padding-left:8px"><span>1 / 1 / 12</span></div>
<div class="td" style="left:202px;width:97px;padding-left:8px"><span style="letter-spacing:-0.15px">1/1/12</span></div>
<div class="td" style="left:300px;width:496px;padding-left:8px"><span>Фонарь Облик 2619 аккум. 19 диодов</span></div>
<div class="td" style="left:1005px;width:146px;padding-left:8px"><span style="letter-spacing:-0.21px">00-00009680</span></div>
<div class="td" style="left:1152px;width:103px;padding-left:8px"><span>Нет</span></div>
<div class="td gray" style="left:1256px;width:166px;padding-left:8px"><span>1 / 1 / 12</span></div>
</div>
<div class="tr" style="top:698px">
<div class="td num" style="left:0px;width:66px;padding-left:8px"><span style="letter-spacing:-0.23px">534</span></div>
<div class="td" style="left:67px;width:33px;padding-left:8px"><i class="cb"></i></div>
<div class="td" style="left:101px;width:100px;padding-left:8px"><span>1 / 1 / 12</span></div>
<div class="td" style="left:202px;width:97px;padding-left:8px"><span style="letter-spacing:-0.15px">1/1/12</span></div>
<div class="td" style="left:300px;width:496px;padding-left:8px"><span>Фонарь Облик 2903 аккум.</span></div>
<div class="td" style="left:1005px;width:146px;padding-left:8px"><span style="letter-spacing:-0.21px">00-00009681</span></div>
<div class="td" style="left:1152px;width:103px;padding-left:8px"><span>Нет</span></div>
<div class="td gray" style="left:1256px;width:166px;padding-left:8px"><span>1 / 1 / 12</span></div>
</div>
<div class="tr" style="top:727px">
<div class="td num" style="left:0px;width:66px;padding-left:8px"><span style="letter-spacing:-0.23px">535</span></div>
<div class="td" style="left:67px;width:33px;padding-left:8px"><i class="cb"></i></div>
<div class="td" style="left:101px;width:100px;padding-left:8px"><span>1 / 1 / 12</span></div>
<div class="td" style="left:202px;width:97px;padding-left:8px"><span style="letter-spacing:-0.15px">1/1/12</span></div>
<div class="td" style="left:300px;width:496px;padding-left:8px"><span>Фонарь Облик 431 садовый - пес барбос</span></div>
<div class="td" style="left:797px;width:207px;padding-left:8px"><span>Облик</span></div>
<div class="td" style="left:1005px;width:146px;padding-left:8px"><span style="letter-spacing:-0.21px">00-00009744</span></div>
<div class="td" style="left:1152px;width:103px;padding-left:8px"><span>Нет</span></div>
<div class="td gray" style="left:1256px;width:166px;padding-left:8px"><span>1 / 1 / 12</span></div>
</div>
<div class="tr" style="top:756px">
<div class="td num" style="left:0px;width:66px;padding-left:8px"><span style="letter-spacing:-0.23px">536</span></div>
<div class="td" style="left:67px;width:33px;padding-left:8px"><i class="cb"></i></div>
<div class="td" style="left:101px;width:100px;padding-left:8px"><span>1 / 1 / 12</span></div>
<div class="td" style="left:202px;width:97px;padding-left:8px"><span style="letter-spacing:-0.15px">1/1/12</span></div>
<div class="td" style="left:300px;width:496px;padding-left:8px"><span>Зарядное устройство Облик 4220A - (AA/AAA) 1 час 220V-12V</span></div>
<div class="td" style="left:1005px;width:146px;padding-left:8px"><span style="letter-spacing:-0.21px">00-00009960</span></div>
<div class="td" style="left:1152px;width:103px;padding-left:8px"><span>Нет</span></div>
<div class="td gray" style="left:1256px;width:166px;padding-left:8px"><span>1 / 1 / 12</span></div>
</div>
<div class="tr" style="top:785px">
<div class="td num" style="left:0px;width:66px;padding-left:8px"><span style="letter-spacing:-0.23px">537</span></div>
<div class="td" style="left:67px;width:33px;padding-left:8px"><i class="cb"></i></div>
<div class="td" style="left:101px;width:100px;padding-left:8px"><span>1 / 1 / 12</span></div>
<div class="td" style="left:202px;width:97px;padding-left:8px"><span style="letter-spacing:-0.15px">1/1/12</span></div>
<div class="td" style="left:300px;width:496px;padding-left:8px"><span>Фонарь Облик 4024 компинг - 20 LED (3*R20)</span></div>
<div class="td" style="left:1005px;width:146px;padding-left:8px"><span style="letter-spacing:-0.21px">00-00009735</span></div>
<div class="td" style="left:1152px;width:103px;padding-left:8px"><span>Нет</span></div>
<div class="td gray" style="left:1256px;width:166px;padding-left:8px"><span>1 / 1 / 12</span></div>
</div>
<div class="vsb"><div class="up"></div><div class="thumb"></div><div class="dot"></div></div>
</div>
<div id="dlg">
 <svg class="abs" style="left:21px;top:32px" width="66" height="66" viewBox="0 0 66 66"><circle cx="33" cy="33" r="30.500" fill="none" stroke="#f53a3a" stroke-width="1.800"/><path d="M20 20l26 26M46 20L20 46" stroke="#f53a3a" stroke-width="1.800" fill="none"/></svg>
 <div class="msg"><span style="letter-spacing:-.18px">{(11, 3)}: Таблица не найдена</span><span style="letter-spacing:-.055px">"Справочник.НоменклатураПоставщиков"</span><span style="letter-spacing:.03px">&lt;&lt;?&gt;&gt;Справочник.НоменклатураПоставщиков КАК</span><span style="letter-spacing:-.11px">НоменклатураПоставщиков</span></div>
 <div class="ok"><span>OK</span></div>
 <div class="lnk"><span>Сформировать отчет об ошибке</span></div>
</div>
<div id="wm"><div style="position:absolute;left:0;top:0;font-size:20px;line-height:24px">Активация Windows</div><div style="position:absolute;left:0;top:24px;font-size:15px;line-height:19px;letter-spacing:.05px">Чтобы активировать Windows, перейдите в компонент<br>панели управления "Система".</div></div>
</div>
<div id="edge"></div>
</body>
</html>
